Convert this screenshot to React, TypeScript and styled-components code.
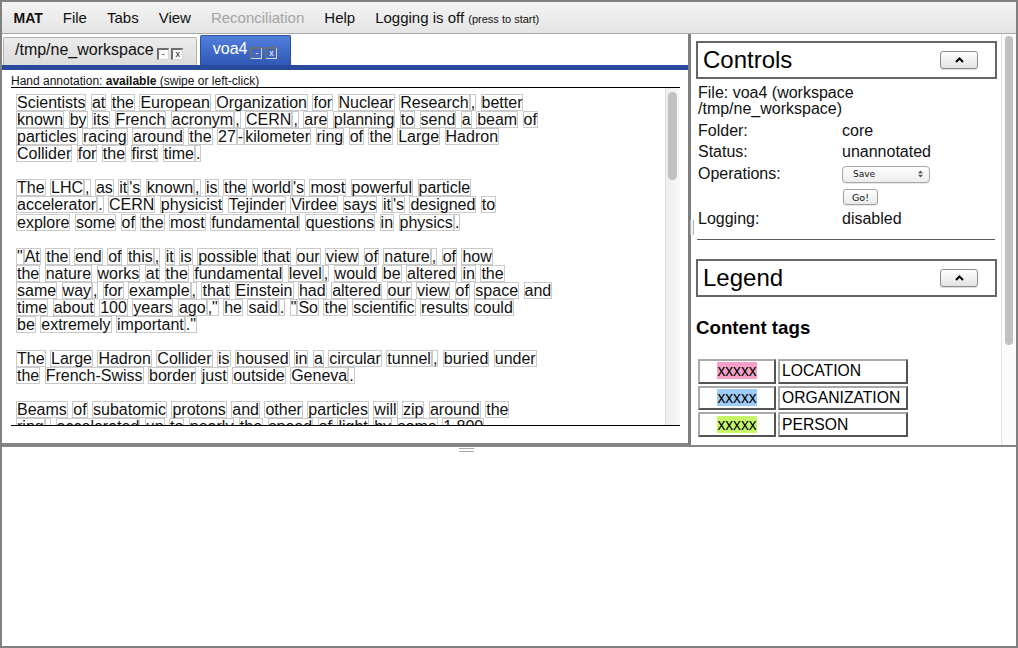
import React from "react";
import styled, { createGlobalStyle } from "styled-components";

const Global = createGlobalStyle`
  html, body { margin: 0; padding: 0; background: #fff; }
  body { font-family: "Liberation Sans", Arial, Helvetica, sans-serif; color: #111; }
  * { box-sizing: border-box; }
`;

const Window = styled.div`
  width: 1018px;
  height: 648px;
  border: 2px solid #808080;
  display: flex;
  flex-direction: column;
  overflow: hidden;
  background: #fff;
`;

const MenuBar = styled.div`
  flex: none;
  height: 32px;
  display: flex;
  align-items: center;
  padding-left: 1.5px;
  background: linear-gradient(#f4f4f4, #e4e4e4);
  border-bottom: 1px solid #a9a9a9;
  font-size: 15px;
  color: #111;
`;

const MenuItem = styled.span<{ $bold?: boolean; $disabled?: boolean }>`
  padding: 0 10px;
  font-size: ${(p) => (p.$bold ? "14px" : "15px")};
  font-weight: ${(p) => (p.$bold ? 700 : 400)};
  color: ${(p) => (p.$disabled ? "#a4a4a4" : "#111")};
  white-space: nowrap;
`;

const Small = styled.small`
  font-size: 11px;
`;

const Upper = styled.div`
  flex: none;
  height: 411px;
  display: flex;
`;

const LeftPane = styled.div`
  width: 686px;
  display: flex;
  flex-direction: column;
  border-bottom: 2px solid #858585;
`;

const TabBar = styled.div`
  flex: none;
  height: 31px;
  display: flex;
  align-items: flex-end;
  gap: 2.5px;
  padding-left: 1px;
`;

const Tab = styled.div<{ $active?: boolean }>`
  display: flex;
  align-items: center;
  height: ${(p) => (p.$active ? "30px" : "27.7px")};
  padding: 0 13px 3px ${(p) => (p.$active ? "12px" : "11px")};
  font-size: 16px;
  color: ${(p) => (p.$active ? "#fff" : "#111")};
  background: ${(p) =>
    p.$active ? "linear-gradient(#527fdc, #3058b6)" : "linear-gradient(#ececec, #dcdcdc)"};
  border: 1px solid ${(p) => (p.$active ? "#2e4f9e" : "#b4b4b4")};
  border-bottom: none;
  border-radius: 2px 2px 0 0;
  white-space: nowrap;
`;

const TabLabel = styled.span`
  margin-right: 3px;
`;

const TabButton = styled.span<{ $active?: boolean }>`
  display: inline-flex;
  align-items: center;
  justify-content: center;
  width: 12px;
  height: 12px;
  margin-top: 8px;
  margin-right: 2.5px;
  border-style: solid;
  border-width: 2px 1px 1px 2px;
  border-color: #6e6e6e #d6d6d6 #d6d6d6 #6e6e6e;
  background: ${(p) => (p.$active ? "#3f67c4" : "#fafafa")};
  color: ${(p) => (p.$active ? "#fff" : "#222")};
  font-size: 9px;
  line-height: 1;
  &:last-child {
    margin-right: 0;
  }
`;

const BlueBar = styled.div`
  flex: none;
  height: 5px;
  background: #294a9c;
`;

const StatusLine = styled.div`
  flex: none;
  margin: 0 8px 0 9px;
  padding-top: 5px;
  line-height: 12px;
  font-size: 12px;
  border-bottom: 1px solid #000;
  color: #111;
  white-space: nowrap;
`;

const DocFrame = styled.div`
  flex: none;
  height: 338px;
  margin: 0 8px 0 9px;
  border-bottom: 1px solid #000;
  display: flex;
`;

const DocBody = styled.div`
  flex: 1;
  overflow: hidden;
  padding: 6px 0 0 5px;
  font-size: 16px;
  color: #111;
`;

const ScrollTrack = styled.div<{ $light?: boolean }>`
  flex: none;
  width: 15px;
  padding: ${(p) => (p.$light ? "2px 3px 0 3px" : "4px 3px 0 2px")};
  background: ${(p) =>
    p.$light ? "#fbfbfb" : "linear-gradient(to right, #ededed, #f8f8f8)"};
  border-left: 1px solid ${(p) => (p.$light ? "#e3e3e3" : "#e0e0e0")};
`;

const ScrollThumb = styled.div`
  border-radius: 5px;
  background: #c1c1c1;
`;

const DocLine = styled.div`
  height: 17.08px;
  line-height: 15px;
  white-space: nowrap;
`;

const Token = styled.span`
  display: inline-block;
  border: 1px solid #cacaca;
  line-height: 15px;
`;

const VSplitter = styled.div`
  flex: none;
  width: 3px;
  background: #7d7d7d;
  display: flex;
  align-items: flex-start;
`;

const VGrip = styled.div`
  position: relative;
  z-index: 2;
  flex: none;
  width: 4px;
  height: 15px;
  margin-top: 186px;
  margin-left: 2px;
  background: #f4f4f4;
  border-left: 1px solid #b0b0b0;
  border-right: 1px solid #b0b0b0;
`;

const RightPane = styled.div`
  flex: 1;
  display: flex;
  min-width: 0;
`;

const RightBody = styled.div`
  flex: 1;
  overflow: hidden;
  padding: 7px 4px 0 5px;
  font-size: 16px;
  color: #111;
`;

const SectionHead = styled.div<{ $gap?: number }>`
  width: 301px;
  height: 38px;
  margin-top: ${(p) => p.$gap ?? 0}px;
  display: flex;
  align-items: center;
  justify-content: space-between;
  padding: 0 17px 0 5px;
  border: 2px solid #676767;
`;

const SectionTitle = styled.span`
  font-size: 24px;
  line-height: 1;
  color: #000;
`;

const CollapseButton = styled.button`
  width: 38px;
  height: 18px;
  padding: 0;
  display: flex;
  align-items: center;
  justify-content: center;
  border: 1px solid #8c8c8c;
  border-radius: 3px;
  background: linear-gradient(#ffffff, #e2e2e2);
  box-shadow: 0 1px 1px rgba(0, 0, 0, 0.15);
`;

const InfoGrid = styled.div`
  display: grid;
  grid-template-columns: 144px 1fr;
  row-gap: 5.6px;
  margin-top: 6px;
  padding-left: 2px;
  line-height: 16px;
  color: #111;
`;

const WideCell = styled.div`
  grid-column: 1 / 3;
  width: 170px;
`;

const OpsCell = styled.div`
  display: flex;
  flex-direction: column;
  align-items: flex-start;
  gap: 6.6px;
`;

const SelectBox = styled.div`
  width: 88px;
  height: 17px;
  display: flex;
  align-items: center;
  justify-content: space-between;
  padding: 0 6px 0 10px;
  border: 1px solid #a8a8a8;
  border-radius: 4px;
  background: linear-gradient(#ffffff, #ececec);
  box-shadow: 0 1px 1px rgba(0, 0, 0, 0.1);
  font-family: "DejaVu Sans", sans-serif;
  font-size: 9px;
  line-height: 1;
  color: #111;
`;

const GoButton = styled.button`
  width: 35px;
  height: 16px;
  margin-left: 1px;
  padding: 0;
  border: 1px solid #a0a0a0;
  border-radius: 3px;
  background: linear-gradient(#ffffff, #e9e9e9);
  box-shadow: 0 1px 1px rgba(0, 0, 0, 0.1);
  font-family: "DejaVu Sans", sans-serif;
  font-size: 9.5px;
  line-height: 1;
  color: #111;
`;

const Rule = styled.hr`
  margin: 11.7px 2px 0 1px;
  border: none;
  border-top: 1px solid #5a5a5a;
  height: 0;
`;

const TagsHeading = styled.h3`
  margin: 20.5px 0 18.3px 0;
  font-size: 18.72px;
  line-height: 21.5px;
  font-weight: 700;
  color: #000;
`;

const LegendTable = styled.table`
  border-collapse: separate;
  border-spacing: 2px;
  font-size: 15.7px;
  color: #000;
`;

const LegendCell = styled.td<{ $w: number; $center?: boolean }>`
  width: ${(p) => p.$w}px;
  height: 24.7px;
  padding: 0 2px;
  border-style: solid;
  border-width: 2px;
  border-color: #a9a9a9 #545454 #545454 #a9a9a9;
  text-align: ${(p) => (p.$center ? "center" : "left")};
  white-space: nowrap;
  line-height: 18px;
`;

const Swatch = styled.span<{ $color: string }>`
  background: ${(p) => p.$color};
`;

const HSplitter = styled.div`
  flex: none;
  height: 2px;
  background: #858585;
`;

const BottomPane = styled.div`
  flex: 1;
  background: #fff;
  padding-top: 1px;
`;

const HGrip = styled.div`
  width: 15px;
  height: 4px;
  margin-left: 457px;
  border-top: 1px solid #a8a8a8;
  border-bottom: 1px solid #a8a8a8;
`;

const paragraphs: string[][] = [
  [
    "Scientists at the European Organization for Nuclear Research, better",
    "known by its French acronym, CERN, are planning to send a beam of",
    "particles racing around the 27-kilometer ring of the Large Hadron",
    "Collider for the first time.",
  ],
  [
    "The LHC, as it's known, is the world's most powerful particle",
    "accelerator. CERN physicist Tejinder Virdee says it's designed to",
    "explore some of the most fundamental questions in physics.",
  ],
  [
    '"At the end of this, it is possible that our view of nature, of how',
    "the nature works at the fundamental level, would be altered in the",
    "same way, for example, that Einstein had altered our view of space and",
    'time about 100 years ago," he said. "So the scientific results could',
    'be extremely important."',
  ],
  [
    "The Large Hadron Collider is housed in a circular tunnel, buried under",
    "the French-Swiss border just outside Geneva.",
  ],
  [
    "Beams of subatomic protons and other particles will zip around the",
    "ring, accelerated up to nearly the speed of light by some 1,800",
  ],
];

const tokenize = (word: string): string[] =>
  word.match(/\d+(?:,\d+)*|[A-Za-z]+(?:-[A-Z][A-Za-z]*)*|'s|[^A-Za-z\d]+/g) || [word];

const Line: React.FC<{ text: string }> = ({ text }) => {
  const words = text.split(" ");
  return (
    <DocLine>
      {words.map((w, i) => (
        <React.Fragment key={i}>
          {i > 0 ? " " : null}
          {tokenize(w).map((t, j) => (
            <Token key={j}>{t}</Token>
          ))}
        </React.Fragment>
      ))}
    </DocLine>
  );
};

const Caret = () => (
  <svg width="9" height="6" viewBox="0 0 9 6">
    <polyline points="1,5 4.5,1.5 8,5" fill="none" stroke="#000" strokeWidth="2" />
  </svg>
);

const SelectArrows = () => (
  <svg width="5" height="8" viewBox="0 0 5 8">
    <polygon points="0,3.3 2.5,0.5 5,3.3" fill="#555" />
    <polygon points="0,4.7 2.5,7.5 5,4.7" fill="#555" />
  </svg>
);

const legend = [
  { color: "#f6a0c9", label: "LOCATION" },
  { color: "#9fcbf7", label: "ORGANIZATION" },
  { color: "#c7f766", label: "PERSON" },
];

export default function App() {
  return (
    <>
      <Global />
      <Window>
        <MenuBar>
          <MenuItem $bold>MAT</MenuItem>
          <MenuItem>File</MenuItem>
          <MenuItem>Tabs</MenuItem>
          <MenuItem>View</MenuItem>
          <MenuItem $disabled>Reconciliation</MenuItem>
          <MenuItem>Help</MenuItem>
          <MenuItem>
            Logging is off <Small>(press to start)</Small>
          </MenuItem>
        </MenuBar>
        <Upper>
          <LeftPane>
            <TabBar>
              <Tab>
                <TabLabel>/tmp/ne_workspace</TabLabel>
                <TabButton>-</TabButton>
                <TabButton>x</TabButton>
              </Tab>
              <Tab $active>
                <TabLabel>voa4</TabLabel>
                <TabButton $active>-</TabButton>
                <TabButton $active>x</TabButton>
              </Tab>
            </TabBar>
            <BlueBar />
            <StatusLine>
              Hand annotation: <b>available</b> (swipe or left-click)
            </StatusLine>
            <DocFrame>
              <DocBody>
                {paragraphs.map((p, i) => (
                  <React.Fragment key={i}>
                    {i > 0 ? <DocLine /> : null}
                    {p.map((l, j) => (
                      <Line key={j} text={l} />
                    ))}
                  </React.Fragment>
                ))}
              </DocBody>
              <ScrollTrack>
                <ScrollThumb style={{ height: 88 }} />
              </ScrollTrack>
            </DocFrame>
          </LeftPane>
          <VSplitter>
            <VGrip />
          </VSplitter>
          <RightPane>
            <RightBody>
              <SectionHead>
                <SectionTitle>Controls</SectionTitle>
                <CollapseButton aria-label="collapse">
                  <Caret />
                </CollapseButton>
              </SectionHead>
              <InfoGrid>
                <WideCell>File: voa4 (workspace /tmp/ne_workspace)</WideCell>
                <div>Folder:</div>
                <div>core</div>
                <div>Status:</div>
                <div>unannotated</div>
                <div>Operations:</div>
                <OpsCell>
                  <SelectBox>
                    <span>Save</span>
                    <SelectArrows />
                  </SelectBox>
                  <GoButton>Go!</GoButton>
                </OpsCell>
                <div>Logging:</div>
                <div>disabled</div>
              </InfoGrid>
              <Rule />
              <SectionHead $gap={19}>
                <SectionTitle>Legend</SectionTitle>
                <CollapseButton aria-label="collapse">
                  <Caret />
                </CollapseButton>
              </SectionHead>
              <TagsHeading>Content tags</TagsHeading>
              <LegendTable>
                <tbody>
                  {legend.map((r) => (
                    <tr key={r.label}>
                      <LegendCell $w={78} $center>
                        <Swatch $color={r.color}>xxxxx</Swatch>
                      </LegendCell>
                      <LegendCell $w={130}>{r.label}</LegendCell>
                    </tr>
                  ))}
                </tbody>
              </LegendTable>
            </RightBody>
            <ScrollTrack $light>
              <ScrollThumb style={{ height: 309 }} />
            </ScrollTrack>
          </RightPane>
        </Upper>
        <HSplitter />
        <BottomPane>
          <HGrip />
        </BottomPane>
      </Window>
    </>
  );
}
